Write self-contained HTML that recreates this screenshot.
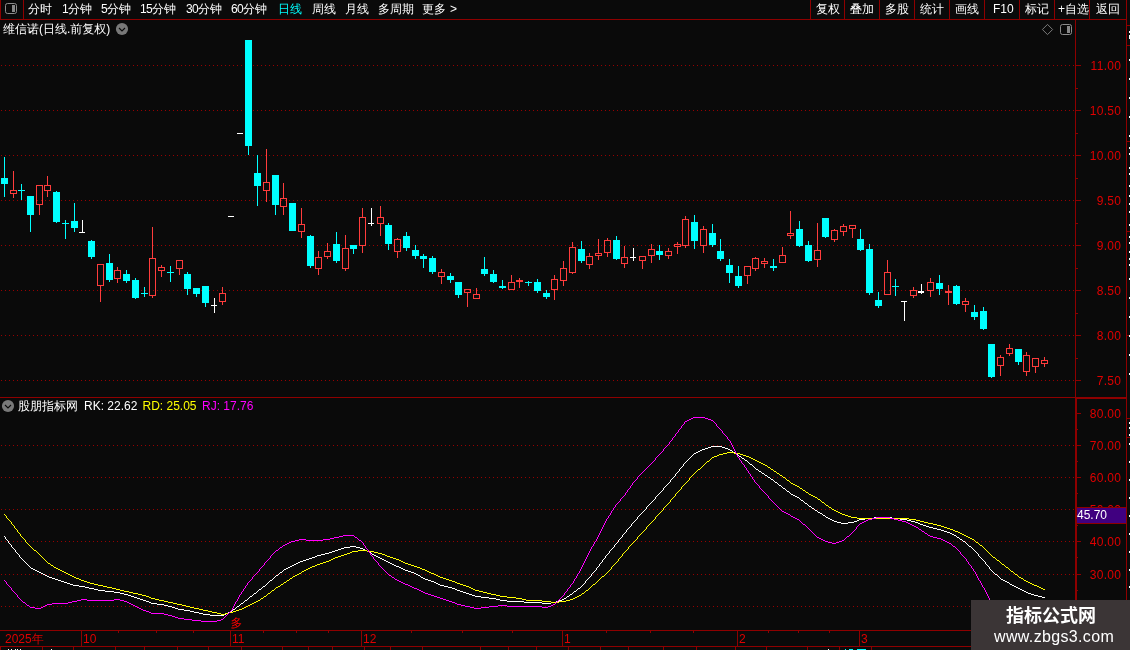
<!DOCTYPE html>
<html><head><meta charset="utf-8"><title>K线</title>
<style>
html,body{margin:0;padding:0;background:#0a0a0a;}
body{width:1130px;height:650px;position:relative;overflow:hidden;font-family:"Liberation Sans","WenQuanYi Zen Hei",sans-serif;font-size:12px;line-height:14px;}
.d{letter-spacing:-0.67px;}
.t{position:absolute;white-space:nowrap;height:14px;line-height:14px;font-size:12px;}
.r{right:8.67px;text-align:right;letter-spacing:0.33px;}
svg{position:absolute;left:0;top:0;}
#tx{position:absolute;left:0;top:0;width:1130px;height:650px;will-change:transform;}
#wm{will-change:transform;position:absolute;left:971px;top:600px;width:159px;height:50px;background:#3b3536;color:#fff;}
#wm .a{position:absolute;left:35px;top:4px;font-size:18px;line-height:24px;font-weight:bold;white-space:nowrap;font-family:"Liberation Sans","Noto Sans CJK SC",sans-serif;}
#wm .b{position:absolute;left:23px;top:27px;font-size:16px;line-height:20px;white-space:nowrap;letter-spacing:0.35px;}
</style></head><body>
<svg width="1130" height="650" viewBox="0 0 1130 650" shape-rendering="crispEdges">
<rect x="0" y="19" width="1127" height="1" fill="#8e0000"/>
<rect x="0" y="0" width="1" height="20" fill="#8e0000"/>
<rect x="23" y="0" width="1" height="20" fill="#8e0000"/>
<rect x="810" y="0" width="1" height="20" fill="#8e0000"/>
<rect x="844" y="0" width="1" height="20" fill="#8e0000"/>
<rect x="879" y="0" width="1" height="20" fill="#8e0000"/>
<rect x="914" y="0" width="1" height="20" fill="#8e0000"/>
<rect x="949" y="0" width="1" height="20" fill="#8e0000"/>
<rect x="984" y="0" width="1" height="20" fill="#8e0000"/>
<rect x="1019" y="0" width="1" height="20" fill="#8e0000"/>
<rect x="1054" y="0" width="1" height="20" fill="#8e0000"/>
<rect x="1089" y="0" width="1" height="20" fill="#8e0000"/>
<rect x="1126" y="0" width="1" height="650" fill="#8e0000"/>
<rect x="1075" y="19" width="1" height="378" fill="#8e0000"/>
<rect x="1075" y="397" width="2" height="234" fill="#8e0000"/>
<rect x="0" y="397" width="1075" height="1" fill="#8e0000"/>
<rect x="1075" y="397" width="52" height="2" fill="#8e0000"/>
<rect x="0" y="630" width="1075" height="1" fill="#8e0000"/>
<rect x="1075" y="630" width="52" height="1" fill="#8e0000"/>
<rect x="0" y="646" width="1127" height="1" fill="#8e0000"/>
<rect x="1126" y="25" width="4" height="1" fill="#8e0000"/>
<rect x="1126" y="45" width="4" height="1" fill="#8e0000"/>
<rect x="1126" y="141" width="4" height="1" fill="#8e0000"/>
<rect x="1126" y="231" width="4" height="1" fill="#8e0000"/>
<rect x="1126" y="335" width="4" height="1" fill="#8e0000"/>
<rect x="1126" y="418" width="4" height="1" fill="#8e0000"/>
<rect x="1126" y="437" width="4" height="1" fill="#8e0000"/>
<line x1="1" y1="65.5" x2="1074" y2="65.5" stroke="#980000" stroke-width="1" stroke-dasharray="1 3"/>
<line x1="1" y1="110.5" x2="1074" y2="110.5" stroke="#980000" stroke-width="1" stroke-dasharray="1 3"/>
<line x1="1" y1="155.5" x2="1074" y2="155.5" stroke="#980000" stroke-width="1" stroke-dasharray="1 3"/>
<line x1="1" y1="200.5" x2="1074" y2="200.5" stroke="#980000" stroke-width="1" stroke-dasharray="1 3"/>
<line x1="1" y1="245.5" x2="1074" y2="245.5" stroke="#980000" stroke-width="1" stroke-dasharray="1 3"/>
<line x1="1" y1="290.5" x2="1074" y2="290.5" stroke="#980000" stroke-width="1" stroke-dasharray="1 3"/>
<line x1="1" y1="335.5" x2="1074" y2="335.5" stroke="#980000" stroke-width="1" stroke-dasharray="1 3"/>
<line x1="1" y1="380.5" x2="1074" y2="380.5" stroke="#980000" stroke-width="1" stroke-dasharray="1 3"/>
<line x1="1" y1="445.5" x2="1074" y2="445.5" stroke="#980000" stroke-width="1" stroke-dasharray="1 3"/>
<line x1="1" y1="477.5" x2="1074" y2="477.5" stroke="#980000" stroke-width="1" stroke-dasharray="1 3"/>
<line x1="1" y1="509.5" x2="1074" y2="509.5" stroke="#980000" stroke-width="1" stroke-dasharray="1 3"/>
<line x1="1" y1="541.5" x2="1074" y2="541.5" stroke="#980000" stroke-width="1" stroke-dasharray="1 3"/>
<line x1="1" y1="574.5" x2="1074" y2="574.5" stroke="#980000" stroke-width="1" stroke-dasharray="1 3"/>
<line x1="1" y1="606.5" x2="1074" y2="606.5" stroke="#980000" stroke-width="1" stroke-dasharray="1 3"/>
<rect x="1076" y="65" width="5" height="1" fill="#8e0000"/>
<rect x="1076" y="88" width="2" height="1" fill="#8e0000"/>
<rect x="1076" y="110" width="5" height="1" fill="#8e0000"/>
<rect x="1076" y="133" width="2" height="1" fill="#8e0000"/>
<rect x="1076" y="155" width="5" height="1" fill="#8e0000"/>
<rect x="1076" y="178" width="2" height="1" fill="#8e0000"/>
<rect x="1076" y="200" width="5" height="1" fill="#8e0000"/>
<rect x="1076" y="223" width="2" height="1" fill="#8e0000"/>
<rect x="1076" y="245" width="5" height="1" fill="#8e0000"/>
<rect x="1076" y="268" width="2" height="1" fill="#8e0000"/>
<rect x="1076" y="290" width="5" height="1" fill="#8e0000"/>
<rect x="1076" y="313" width="2" height="1" fill="#8e0000"/>
<rect x="1076" y="335" width="5" height="1" fill="#8e0000"/>
<rect x="1076" y="358" width="2" height="1" fill="#8e0000"/>
<rect x="1076" y="380" width="5" height="1" fill="#8e0000"/>
<rect x="1077" y="413" width="4" height="1" fill="#8e0000"/>
<rect x="1077" y="429" width="1" height="1" fill="#8e0000"/>
<rect x="1077" y="445" width="4" height="1" fill="#8e0000"/>
<rect x="1077" y="461" width="1" height="1" fill="#8e0000"/>
<rect x="1077" y="477" width="4" height="1" fill="#8e0000"/>
<rect x="1077" y="493" width="1" height="1" fill="#8e0000"/>
<rect x="1077" y="509" width="4" height="1" fill="#8e0000"/>
<rect x="1077" y="525" width="1" height="1" fill="#8e0000"/>
<rect x="1077" y="541" width="4" height="1" fill="#8e0000"/>
<rect x="1077" y="557" width="1" height="1" fill="#8e0000"/>
<rect x="1077" y="574" width="4" height="1" fill="#8e0000"/>
<rect x="1077" y="590" width="1" height="1" fill="#8e0000"/>
<rect x="1077" y="606" width="4" height="1" fill="#8e0000"/>
<rect x="1077" y="622" width="2" height="1" fill="#8e0000"/>
<rect x="81" y="630" width="1" height="17" fill="#8e0000"/>
<rect x="230" y="630" width="1" height="17" fill="#8e0000"/>
<rect x="361" y="630" width="1" height="17" fill="#8e0000"/>
<rect x="562" y="630" width="1" height="17" fill="#8e0000"/>
<rect x="737" y="630" width="1" height="17" fill="#8e0000"/>
<rect x="859" y="630" width="1" height="17" fill="#8e0000"/>
<rect x="118" y="630" width="1" height="3" fill="#8e0000"/>
<rect x="156" y="630" width="1" height="3" fill="#8e0000"/>
<rect x="193" y="630" width="1" height="3" fill="#8e0000"/>
<rect x="263" y="630" width="1" height="3" fill="#8e0000"/>
<rect x="296" y="630" width="1" height="3" fill="#8e0000"/>
<rect x="328" y="630" width="1" height="3" fill="#8e0000"/>
<rect x="411" y="630" width="1" height="3" fill="#8e0000"/>
<rect x="462" y="630" width="1" height="3" fill="#8e0000"/>
<rect x="512" y="630" width="1" height="3" fill="#8e0000"/>
<rect x="606" y="630" width="1" height="3" fill="#8e0000"/>
<rect x="650" y="630" width="1" height="3" fill="#8e0000"/>
<rect x="693" y="630" width="1" height="3" fill="#8e0000"/>
<rect x="768" y="630" width="1" height="3" fill="#8e0000"/>
<rect x="798" y="630" width="1" height="3" fill="#8e0000"/>
<rect x="829" y="630" width="1" height="3" fill="#8e0000"/>
<rect x="0" y="647" width="1" height="3" fill="#8e0000"/>
<rect x="42" y="647" width="1" height="3" fill="#8e0000"/>
<rect x="73" y="647" width="1" height="3" fill="#8e0000"/>
<rect x="115" y="647" width="1" height="3" fill="#8e0000"/>
<rect x="144" y="647" width="1" height="3" fill="#8e0000"/>
<rect x="177" y="647" width="1" height="3" fill="#8e0000"/>
<rect x="208" y="647" width="1" height="3" fill="#8e0000"/>
<rect x="241" y="647" width="1" height="3" fill="#8e0000"/>
<rect x="282" y="647" width="1" height="3" fill="#8e0000"/>
<rect x="308" y="647" width="1" height="3" fill="#8e0000"/>
<rect x="332" y="647" width="1" height="3" fill="#8e0000"/>
<rect x="364" y="647" width="1" height="3" fill="#8e0000"/>
<rect x="390" y="647" width="1" height="3" fill="#8e0000"/>
<rect x="422" y="647" width="1" height="3" fill="#8e0000"/>
<rect x="480" y="647" width="1" height="3" fill="#8e0000"/>
<rect x="508" y="647" width="1" height="3" fill="#8e0000"/>
<rect x="536" y="647" width="1" height="3" fill="#8e0000"/>
<rect x="568" y="647" width="1" height="3" fill="#8e0000"/>
<rect x="600" y="647" width="1" height="3" fill="#8e0000"/>
<rect x="628" y="647" width="1" height="3" fill="#8e0000"/>
<rect x="663" y="647" width="1" height="3" fill="#8e0000"/>
<rect x="696" y="647" width="1" height="3" fill="#8e0000"/>
<rect x="735" y="647" width="1" height="3" fill="#8e0000"/>
<rect x="766" y="647" width="1" height="3" fill="#8e0000"/>
<rect x="807" y="647" width="1" height="3" fill="#8e0000"/>
<rect x="839" y="647" width="1" height="3" fill="#8e0000"/>
<rect x="871" y="647" width="1" height="3" fill="#8e0000"/>
<rect x="8" y="649" width="1" height="1" fill="#ffffff"/>
<rect x="11" y="649" width="1" height="1" fill="#ffffff"/>
<rect x="15" y="649" width="1" height="1" fill="#ffffff"/>
<rect x="17" y="649" width="1" height="1" fill="#ffffff"/>
<rect x="20" y="649" width="1" height="1" fill="#ffffff"/>
<rect x="51" y="649" width="1" height="1" fill="#ffffff"/>
<rect x="828" y="649" width="1" height="1" fill="#ffffff"/>
<rect x="845" y="649" width="1" height="1" fill="#00ffff"/>
<rect x="849" y="649" width="4" height="1" fill="#00ffff"/>
<rect x="857" y="649" width="9" height="1" fill="#00ffff"/>
<rect x="1129" y="31" width="1" height="2" fill="#ffffff"/>
<rect x="1129" y="35" width="1" height="2" fill="#ffffff"/>
<rect x="1129" y="37" width="1" height="2" fill="#ffffff"/>
<rect x="1129" y="59" width="1" height="2" fill="#ffffff"/>
<rect x="1129" y="78" width="1" height="2" fill="#ffffff"/>
<rect x="1129" y="97" width="1" height="2" fill="#ffffff"/>
<rect x="1129" y="116" width="1" height="2" fill="#ffffff"/>
<rect x="1129" y="135" width="1" height="2" fill="#ffffff"/>
<rect x="1129" y="147" width="1" height="2" fill="#ffffff"/>
<rect x="1129" y="153" width="1" height="2" fill="#ffffff"/>
<rect x="1129" y="167" width="1" height="2" fill="#ffffff"/>
<rect x="1129" y="173" width="1" height="2" fill="#ffffff"/>
<rect x="1129" y="185" width="1" height="2" fill="#ffffff"/>
<rect x="1129" y="195" width="1" height="2" fill="#ffffff"/>
<rect x="1129" y="203" width="1" height="2" fill="#ffffff"/>
<rect x="1129" y="211" width="1" height="2" fill="#ffffff"/>
<rect x="1129" y="224" width="1" height="2" fill="#ffffff"/>
<rect x="1129" y="236" width="1" height="2" fill="#ffffff"/>
<rect x="1129" y="242" width="1" height="2" fill="#ffffff"/>
<rect x="1129" y="251" width="1" height="2" fill="#ffffff"/>
<rect x="1129" y="258" width="1" height="2" fill="#ffffff"/>
<rect x="1129" y="264" width="1" height="2" fill="#ffffff"/>
<rect x="1129" y="278" width="1" height="2" fill="#ffffff"/>
<rect x="1129" y="297" width="1" height="2" fill="#ffffff"/>
<rect x="1129" y="316" width="1" height="2" fill="#ffffff"/>
<rect x="1129" y="335" width="1" height="2" fill="#ffffff"/>
<rect x="1129" y="354" width="1" height="2" fill="#ffffff"/>
<rect x="1129" y="373" width="1" height="2" fill="#ffffff"/>
<rect x="1129" y="422" width="1" height="2" fill="#ffffff"/>
<rect x="1129" y="427" width="1" height="2" fill="#ffffff"/>
<rect x="1129" y="434" width="1" height="2" fill="#ffffff"/>
<rect x="1129" y="443" width="1" height="2" fill="#ffffff"/>
<rect x="1129" y="461" width="1" height="2" fill="#ffffff"/>
<rect x="1129" y="479" width="1" height="2" fill="#ffffff"/>
<rect x="1129" y="497" width="1" height="2" fill="#ffffff"/>
<rect x="1129" y="515" width="1" height="2" fill="#ffffff"/>
<rect x="1129" y="533" width="1" height="2" fill="#ffffff"/>
<rect x="1129" y="551" width="1" height="2" fill="#ffffff"/>
<rect x="1129" y="569" width="1" height="2" fill="#ffffff"/>
<rect x="1129" y="586" width="1" height="2" fill="#ffffff"/>
<rect x="4" y="157" width="1" height="40" fill="#00ffff"/>
<rect x="1" y="178" width="7" height="6" fill="#00ffff"/>
<rect x="13" y="171" width="1" height="19" fill="#ff3c3c"/>
<rect x="13" y="194" width="1" height="4" fill="#ff3c3c"/>
<rect x="10" y="190" width="7" height="1" fill="#ff3c3c"/>
<rect x="10" y="193" width="7" height="1" fill="#ff3c3c"/>
<rect x="10" y="190" width="1" height="4" fill="#ff3c3c"/>
<rect x="16" y="190" width="1" height="4" fill="#ff3c3c"/>
<rect x="21" y="184" width="1" height="16" fill="#00ffff"/>
<rect x="18" y="190" width="7" height="1" fill="#00ffff"/>
<rect x="30" y="196" width="1" height="36" fill="#00ffff"/>
<rect x="27" y="196" width="7" height="19" fill="#00ffff"/>
<rect x="39" y="205" width="1" height="10" fill="#ff3c3c"/>
<rect x="36" y="185" width="7" height="1" fill="#ff3c3c"/>
<rect x="36" y="204" width="7" height="1" fill="#ff3c3c"/>
<rect x="36" y="185" width="1" height="20" fill="#ff3c3c"/>
<rect x="42" y="185" width="1" height="20" fill="#ff3c3c"/>
<rect x="47" y="176" width="1" height="9" fill="#ff3c3c"/>
<rect x="47" y="191" width="1" height="6" fill="#ff3c3c"/>
<rect x="44" y="185" width="7" height="1" fill="#ff3c3c"/>
<rect x="44" y="190" width="7" height="1" fill="#ff3c3c"/>
<rect x="44" y="185" width="1" height="6" fill="#ff3c3c"/>
<rect x="50" y="185" width="1" height="6" fill="#ff3c3c"/>
<rect x="56" y="191" width="1" height="32" fill="#00ffff"/>
<rect x="53" y="192" width="7" height="30" fill="#00ffff"/>
<rect x="65" y="220" width="1" height="19" fill="#00ffff"/>
<rect x="62" y="223" width="7" height="1" fill="#00ffff"/>
<rect x="74" y="203" width="1" height="29" fill="#00ffff"/>
<rect x="71" y="221" width="7" height="7" fill="#00ffff"/>
<rect x="82" y="220" width="1" height="13" fill="#ffffff"/>
<rect x="79" y="232" width="6" height="1" fill="#ffffff"/>
<rect x="91" y="240" width="1" height="19" fill="#00ffff"/>
<rect x="88" y="241" width="7" height="16" fill="#00ffff"/>
<rect x="100" y="286" width="1" height="16" fill="#ff3c3c"/>
<rect x="97" y="264" width="7" height="1" fill="#ff3c3c"/>
<rect x="97" y="285" width="7" height="1" fill="#ff3c3c"/>
<rect x="97" y="264" width="1" height="22" fill="#ff3c3c"/>
<rect x="103" y="264" width="1" height="22" fill="#ff3c3c"/>
<rect x="109" y="254" width="1" height="28" fill="#00ffff"/>
<rect x="106" y="263" width="7" height="17" fill="#00ffff"/>
<rect x="117" y="267" width="1" height="3" fill="#ff3c3c"/>
<rect x="117" y="279" width="1" height="4" fill="#ff3c3c"/>
<rect x="114" y="270" width="7" height="1" fill="#ff3c3c"/>
<rect x="114" y="278" width="7" height="1" fill="#ff3c3c"/>
<rect x="114" y="270" width="1" height="9" fill="#ff3c3c"/>
<rect x="120" y="270" width="1" height="9" fill="#ff3c3c"/>
<rect x="126" y="270" width="1" height="13" fill="#00ffff"/>
<rect x="123" y="274" width="7" height="7" fill="#00ffff"/>
<rect x="135" y="278" width="1" height="21" fill="#00ffff"/>
<rect x="132" y="280" width="7" height="18" fill="#00ffff"/>
<rect x="144" y="287" width="1" height="10" fill="#00ffff"/>
<rect x="141" y="293" width="7" height="1" fill="#00ffff"/>
<rect x="152" y="227" width="1" height="31" fill="#ff3c3c"/>
<rect x="152" y="296" width="1" height="2" fill="#ff3c3c"/>
<rect x="149" y="258" width="7" height="1" fill="#ff3c3c"/>
<rect x="149" y="295" width="7" height="1" fill="#ff3c3c"/>
<rect x="149" y="258" width="1" height="38" fill="#ff3c3c"/>
<rect x="155" y="258" width="1" height="38" fill="#ff3c3c"/>
<rect x="161" y="265" width="1" height="2" fill="#ff3c3c"/>
<rect x="161" y="271" width="1" height="6" fill="#ff3c3c"/>
<rect x="158" y="267" width="7" height="1" fill="#ff3c3c"/>
<rect x="158" y="270" width="7" height="1" fill="#ff3c3c"/>
<rect x="158" y="267" width="1" height="4" fill="#ff3c3c"/>
<rect x="164" y="267" width="1" height="4" fill="#ff3c3c"/>
<rect x="170" y="266" width="1" height="16" fill="#00ffff"/>
<rect x="167" y="272" width="7" height="1" fill="#00ffff"/>
<rect x="179" y="269" width="1" height="6" fill="#ff3c3c"/>
<rect x="176" y="260" width="7" height="1" fill="#ff3c3c"/>
<rect x="176" y="268" width="7" height="1" fill="#ff3c3c"/>
<rect x="176" y="260" width="1" height="9" fill="#ff3c3c"/>
<rect x="182" y="260" width="1" height="9" fill="#ff3c3c"/>
<rect x="187" y="272" width="1" height="23" fill="#00ffff"/>
<rect x="184" y="274" width="7" height="15" fill="#00ffff"/>
<rect x="196" y="288" width="1" height="9" fill="#00ffff"/>
<rect x="193" y="288" width="7" height="6" fill="#00ffff"/>
<rect x="205" y="286" width="1" height="21" fill="#00ffff"/>
<rect x="202" y="286" width="7" height="17" fill="#00ffff"/>
<rect x="214" y="298" width="1" height="15" fill="#ffffff"/>
<rect x="211" y="305" width="6" height="1" fill="#ffffff"/>
<rect x="222" y="287" width="1" height="6" fill="#ff3c3c"/>
<rect x="222" y="302" width="1" height="3" fill="#ff3c3c"/>
<rect x="219" y="293" width="7" height="1" fill="#ff3c3c"/>
<rect x="219" y="301" width="7" height="1" fill="#ff3c3c"/>
<rect x="219" y="293" width="1" height="9" fill="#ff3c3c"/>
<rect x="225" y="293" width="1" height="9" fill="#ff3c3c"/>
<rect x="231" y="216" width="1" height="1" fill="#ffffff"/>
<rect x="228" y="216" width="6" height="1" fill="#ffffff"/>
<rect x="240" y="133" width="1" height="1" fill="#ffffff"/>
<rect x="237" y="133" width="6" height="1" fill="#ffffff"/>
<rect x="248" y="40" width="1" height="115" fill="#00ffff"/>
<rect x="245" y="40" width="7" height="106" fill="#00ffff"/>
<rect x="257" y="155" width="1" height="51" fill="#00ffff"/>
<rect x="254" y="173" width="7" height="13" fill="#00ffff"/>
<rect x="266" y="149" width="1" height="33" fill="#ff3c3c"/>
<rect x="266" y="191" width="1" height="11" fill="#ff3c3c"/>
<rect x="263" y="182" width="7" height="1" fill="#ff3c3c"/>
<rect x="263" y="190" width="7" height="1" fill="#ff3c3c"/>
<rect x="263" y="182" width="1" height="9" fill="#ff3c3c"/>
<rect x="269" y="182" width="1" height="9" fill="#ff3c3c"/>
<rect x="275" y="175" width="1" height="40" fill="#00ffff"/>
<rect x="272" y="175" width="7" height="30" fill="#00ffff"/>
<rect x="283" y="183" width="1" height="15" fill="#ff3c3c"/>
<rect x="283" y="207" width="1" height="8" fill="#ff3c3c"/>
<rect x="280" y="198" width="7" height="1" fill="#ff3c3c"/>
<rect x="280" y="206" width="7" height="1" fill="#ff3c3c"/>
<rect x="280" y="198" width="1" height="9" fill="#ff3c3c"/>
<rect x="286" y="198" width="1" height="9" fill="#ff3c3c"/>
<rect x="292" y="203" width="1" height="28" fill="#00ffff"/>
<rect x="289" y="203" width="7" height="28" fill="#00ffff"/>
<rect x="301" y="208" width="1" height="16" fill="#ff3c3c"/>
<rect x="301" y="232" width="1" height="6" fill="#ff3c3c"/>
<rect x="298" y="224" width="7" height="1" fill="#ff3c3c"/>
<rect x="298" y="231" width="7" height="1" fill="#ff3c3c"/>
<rect x="298" y="224" width="1" height="8" fill="#ff3c3c"/>
<rect x="304" y="224" width="1" height="8" fill="#ff3c3c"/>
<rect x="310" y="235" width="1" height="33" fill="#00ffff"/>
<rect x="307" y="236" width="7" height="30" fill="#00ffff"/>
<rect x="318" y="251" width="1" height="6" fill="#ff3c3c"/>
<rect x="318" y="269" width="1" height="6" fill="#ff3c3c"/>
<rect x="315" y="257" width="7" height="1" fill="#ff3c3c"/>
<rect x="315" y="268" width="7" height="1" fill="#ff3c3c"/>
<rect x="315" y="257" width="1" height="12" fill="#ff3c3c"/>
<rect x="321" y="257" width="1" height="12" fill="#ff3c3c"/>
<rect x="327" y="243" width="1" height="8" fill="#ff3c3c"/>
<rect x="327" y="257" width="1" height="2" fill="#ff3c3c"/>
<rect x="324" y="251" width="7" height="1" fill="#ff3c3c"/>
<rect x="324" y="256" width="7" height="1" fill="#ff3c3c"/>
<rect x="324" y="251" width="1" height="6" fill="#ff3c3c"/>
<rect x="330" y="251" width="1" height="6" fill="#ff3c3c"/>
<rect x="336" y="232" width="1" height="31" fill="#00ffff"/>
<rect x="333" y="244" width="7" height="17" fill="#00ffff"/>
<rect x="345" y="235" width="1" height="13" fill="#ff3c3c"/>
<rect x="345" y="269" width="1" height="2" fill="#ff3c3c"/>
<rect x="342" y="248" width="7" height="1" fill="#ff3c3c"/>
<rect x="342" y="268" width="7" height="1" fill="#ff3c3c"/>
<rect x="342" y="248" width="1" height="21" fill="#ff3c3c"/>
<rect x="348" y="248" width="1" height="21" fill="#ff3c3c"/>
<rect x="353" y="245" width="1" height="9" fill="#00ffff"/>
<rect x="350" y="245" width="7" height="4" fill="#00ffff"/>
<rect x="362" y="208" width="1" height="9" fill="#ff3c3c"/>
<rect x="362" y="246" width="1" height="7" fill="#ff3c3c"/>
<rect x="359" y="217" width="7" height="1" fill="#ff3c3c"/>
<rect x="359" y="245" width="7" height="1" fill="#ff3c3c"/>
<rect x="359" y="217" width="1" height="29" fill="#ff3c3c"/>
<rect x="365" y="217" width="1" height="29" fill="#ff3c3c"/>
<rect x="371" y="208" width="1" height="18" fill="#ffffff"/>
<rect x="368" y="223" width="6" height="1" fill="#ffffff"/>
<rect x="380" y="206" width="1" height="11" fill="#ff3c3c"/>
<rect x="380" y="224" width="1" height="12" fill="#ff3c3c"/>
<rect x="377" y="217" width="7" height="1" fill="#ff3c3c"/>
<rect x="377" y="223" width="7" height="1" fill="#ff3c3c"/>
<rect x="377" y="217" width="1" height="7" fill="#ff3c3c"/>
<rect x="383" y="217" width="1" height="7" fill="#ff3c3c"/>
<rect x="388" y="223" width="1" height="27" fill="#00ffff"/>
<rect x="385" y="225" width="7" height="19" fill="#00ffff"/>
<rect x="397" y="238" width="1" height="1" fill="#ff3c3c"/>
<rect x="397" y="252" width="1" height="6" fill="#ff3c3c"/>
<rect x="394" y="239" width="7" height="1" fill="#ff3c3c"/>
<rect x="394" y="251" width="7" height="1" fill="#ff3c3c"/>
<rect x="394" y="239" width="1" height="13" fill="#ff3c3c"/>
<rect x="400" y="239" width="1" height="13" fill="#ff3c3c"/>
<rect x="406" y="232" width="1" height="19" fill="#00ffff"/>
<rect x="403" y="236" width="7" height="12" fill="#00ffff"/>
<rect x="415" y="245" width="1" height="14" fill="#00ffff"/>
<rect x="412" y="250" width="7" height="6" fill="#00ffff"/>
<rect x="423" y="254" width="1" height="14" fill="#00ffff"/>
<rect x="420" y="256" width="7" height="3" fill="#00ffff"/>
<rect x="432" y="256" width="1" height="18" fill="#00ffff"/>
<rect x="429" y="258" width="7" height="14" fill="#00ffff"/>
<rect x="441" y="269" width="1" height="3" fill="#ff3c3c"/>
<rect x="441" y="277" width="1" height="7" fill="#ff3c3c"/>
<rect x="438" y="272" width="7" height="1" fill="#ff3c3c"/>
<rect x="438" y="276" width="7" height="1" fill="#ff3c3c"/>
<rect x="438" y="272" width="1" height="5" fill="#ff3c3c"/>
<rect x="444" y="272" width="1" height="5" fill="#ff3c3c"/>
<rect x="450" y="273" width="1" height="10" fill="#00ffff"/>
<rect x="447" y="276" width="7" height="4" fill="#00ffff"/>
<rect x="458" y="282" width="1" height="16" fill="#00ffff"/>
<rect x="455" y="282" width="7" height="13" fill="#00ffff"/>
<rect x="467" y="293" width="1" height="14" fill="#ff3c3c"/>
<rect x="464" y="289" width="7" height="1" fill="#ff3c3c"/>
<rect x="464" y="292" width="7" height="1" fill="#ff3c3c"/>
<rect x="464" y="289" width="1" height="4" fill="#ff3c3c"/>
<rect x="470" y="289" width="1" height="4" fill="#ff3c3c"/>
<rect x="476" y="288" width="1" height="6" fill="#ff3c3c"/>
<rect x="473" y="294" width="7" height="1" fill="#ff3c3c"/>
<rect x="473" y="298" width="7" height="1" fill="#ff3c3c"/>
<rect x="473" y="294" width="1" height="5" fill="#ff3c3c"/>
<rect x="479" y="294" width="1" height="5" fill="#ff3c3c"/>
<rect x="484" y="257" width="1" height="19" fill="#00ffff"/>
<rect x="481" y="269" width="7" height="5" fill="#00ffff"/>
<rect x="493" y="270" width="1" height="13" fill="#00ffff"/>
<rect x="490" y="274" width="7" height="8" fill="#00ffff"/>
<rect x="502" y="280" width="1" height="9" fill="#00ffff"/>
<rect x="499" y="286" width="7" height="2" fill="#00ffff"/>
<rect x="511" y="275" width="1" height="7" fill="#ff3c3c"/>
<rect x="508" y="282" width="7" height="1" fill="#ff3c3c"/>
<rect x="508" y="289" width="7" height="1" fill="#ff3c3c"/>
<rect x="508" y="282" width="1" height="8" fill="#ff3c3c"/>
<rect x="514" y="282" width="1" height="8" fill="#ff3c3c"/>
<rect x="519" y="278" width="1" height="2" fill="#ff3c3c"/>
<rect x="519" y="282" width="1" height="6" fill="#ff3c3c"/>
<rect x="516" y="280" width="7" height="2" fill="#ff3c3c"/>
<rect x="528" y="281" width="1" height="5" fill="#00ffff"/>
<rect x="525" y="282" width="7" height="1" fill="#00ffff"/>
<rect x="537" y="279" width="1" height="14" fill="#00ffff"/>
<rect x="534" y="282" width="7" height="9" fill="#00ffff"/>
<rect x="546" y="290" width="1" height="9" fill="#00ffff"/>
<rect x="543" y="293" width="7" height="4" fill="#00ffff"/>
<rect x="554" y="275" width="1" height="4" fill="#ff3c3c"/>
<rect x="554" y="290" width="1" height="10" fill="#ff3c3c"/>
<rect x="551" y="279" width="7" height="1" fill="#ff3c3c"/>
<rect x="551" y="289" width="7" height="1" fill="#ff3c3c"/>
<rect x="551" y="279" width="1" height="11" fill="#ff3c3c"/>
<rect x="557" y="279" width="1" height="11" fill="#ff3c3c"/>
<rect x="563" y="261" width="1" height="7" fill="#ff3c3c"/>
<rect x="563" y="281" width="1" height="5" fill="#ff3c3c"/>
<rect x="560" y="268" width="7" height="1" fill="#ff3c3c"/>
<rect x="560" y="280" width="7" height="1" fill="#ff3c3c"/>
<rect x="560" y="268" width="1" height="13" fill="#ff3c3c"/>
<rect x="566" y="268" width="1" height="13" fill="#ff3c3c"/>
<rect x="572" y="242" width="1" height="5" fill="#ff3c3c"/>
<rect x="572" y="273" width="1" height="1" fill="#ff3c3c"/>
<rect x="569" y="247" width="7" height="1" fill="#ff3c3c"/>
<rect x="569" y="272" width="7" height="1" fill="#ff3c3c"/>
<rect x="569" y="247" width="1" height="26" fill="#ff3c3c"/>
<rect x="575" y="247" width="1" height="26" fill="#ff3c3c"/>
<rect x="581" y="241" width="1" height="22" fill="#00ffff"/>
<rect x="578" y="249" width="7" height="12" fill="#00ffff"/>
<rect x="589" y="253" width="1" height="3" fill="#ff3c3c"/>
<rect x="589" y="265" width="1" height="4" fill="#ff3c3c"/>
<rect x="586" y="256" width="7" height="1" fill="#ff3c3c"/>
<rect x="586" y="264" width="7" height="1" fill="#ff3c3c"/>
<rect x="586" y="256" width="1" height="9" fill="#ff3c3c"/>
<rect x="592" y="256" width="1" height="9" fill="#ff3c3c"/>
<rect x="598" y="239" width="1" height="14" fill="#ff3c3c"/>
<rect x="598" y="256" width="1" height="4" fill="#ff3c3c"/>
<rect x="595" y="253" width="7" height="1" fill="#ff3c3c"/>
<rect x="595" y="255" width="7" height="1" fill="#ff3c3c"/>
<rect x="595" y="253" width="1" height="3" fill="#ff3c3c"/>
<rect x="601" y="253" width="1" height="3" fill="#ff3c3c"/>
<rect x="607" y="238" width="1" height="2" fill="#ff3c3c"/>
<rect x="607" y="253" width="1" height="4" fill="#ff3c3c"/>
<rect x="604" y="240" width="7" height="1" fill="#ff3c3c"/>
<rect x="604" y="252" width="7" height="1" fill="#ff3c3c"/>
<rect x="604" y="240" width="1" height="13" fill="#ff3c3c"/>
<rect x="610" y="240" width="1" height="13" fill="#ff3c3c"/>
<rect x="616" y="236" width="1" height="24" fill="#00ffff"/>
<rect x="613" y="240" width="7" height="19" fill="#00ffff"/>
<rect x="624" y="246" width="1" height="11" fill="#ff3c3c"/>
<rect x="624" y="264" width="1" height="4" fill="#ff3c3c"/>
<rect x="621" y="257" width="7" height="1" fill="#ff3c3c"/>
<rect x="621" y="263" width="7" height="1" fill="#ff3c3c"/>
<rect x="621" y="257" width="1" height="7" fill="#ff3c3c"/>
<rect x="627" y="257" width="1" height="7" fill="#ff3c3c"/>
<rect x="633" y="248" width="1" height="13" fill="#ffffff"/>
<rect x="630" y="257" width="6" height="1" fill="#ffffff"/>
<rect x="642" y="261" width="1" height="8" fill="#ff3c3c"/>
<rect x="639" y="256" width="7" height="1" fill="#ff3c3c"/>
<rect x="639" y="260" width="7" height="1" fill="#ff3c3c"/>
<rect x="639" y="256" width="1" height="5" fill="#ff3c3c"/>
<rect x="645" y="256" width="1" height="5" fill="#ff3c3c"/>
<rect x="651" y="244" width="1" height="5" fill="#ff3c3c"/>
<rect x="651" y="256" width="1" height="7" fill="#ff3c3c"/>
<rect x="648" y="249" width="7" height="1" fill="#ff3c3c"/>
<rect x="648" y="255" width="7" height="1" fill="#ff3c3c"/>
<rect x="648" y="249" width="1" height="7" fill="#ff3c3c"/>
<rect x="654" y="249" width="1" height="7" fill="#ff3c3c"/>
<rect x="659" y="245" width="1" height="15" fill="#00ffff"/>
<rect x="656" y="251" width="7" height="4" fill="#00ffff"/>
<rect x="668" y="248" width="1" height="3" fill="#ff3c3c"/>
<rect x="668" y="256" width="1" height="3" fill="#ff3c3c"/>
<rect x="665" y="251" width="7" height="1" fill="#ff3c3c"/>
<rect x="665" y="255" width="7" height="1" fill="#ff3c3c"/>
<rect x="665" y="251" width="1" height="5" fill="#ff3c3c"/>
<rect x="671" y="251" width="1" height="5" fill="#ff3c3c"/>
<rect x="677" y="242" width="1" height="2" fill="#ff3c3c"/>
<rect x="677" y="247" width="1" height="7" fill="#ff3c3c"/>
<rect x="674" y="244" width="7" height="1" fill="#ff3c3c"/>
<rect x="674" y="246" width="7" height="1" fill="#ff3c3c"/>
<rect x="674" y="244" width="1" height="3" fill="#ff3c3c"/>
<rect x="680" y="244" width="1" height="3" fill="#ff3c3c"/>
<rect x="685" y="216" width="1" height="3" fill="#ff3c3c"/>
<rect x="685" y="246" width="1" height="2" fill="#ff3c3c"/>
<rect x="682" y="219" width="7" height="1" fill="#ff3c3c"/>
<rect x="682" y="245" width="7" height="1" fill="#ff3c3c"/>
<rect x="682" y="219" width="1" height="27" fill="#ff3c3c"/>
<rect x="688" y="219" width="1" height="27" fill="#ff3c3c"/>
<rect x="694" y="215" width="1" height="34" fill="#00ffff"/>
<rect x="691" y="222" width="7" height="19" fill="#00ffff"/>
<rect x="703" y="226" width="1" height="3" fill="#ff3c3c"/>
<rect x="703" y="246" width="1" height="7" fill="#ff3c3c"/>
<rect x="700" y="229" width="7" height="1" fill="#ff3c3c"/>
<rect x="700" y="245" width="7" height="1" fill="#ff3c3c"/>
<rect x="700" y="229" width="1" height="17" fill="#ff3c3c"/>
<rect x="706" y="229" width="1" height="17" fill="#ff3c3c"/>
<rect x="712" y="224" width="1" height="23" fill="#00ffff"/>
<rect x="709" y="233" width="7" height="12" fill="#00ffff"/>
<rect x="720" y="239" width="1" height="22" fill="#00ffff"/>
<rect x="717" y="251" width="7" height="8" fill="#00ffff"/>
<rect x="729" y="259" width="1" height="24" fill="#00ffff"/>
<rect x="726" y="265" width="7" height="8" fill="#00ffff"/>
<rect x="738" y="266" width="1" height="22" fill="#00ffff"/>
<rect x="735" y="276" width="7" height="10" fill="#00ffff"/>
<rect x="747" y="276" width="1" height="8" fill="#ff3c3c"/>
<rect x="744" y="266" width="7" height="1" fill="#ff3c3c"/>
<rect x="744" y="275" width="7" height="1" fill="#ff3c3c"/>
<rect x="744" y="266" width="1" height="10" fill="#ff3c3c"/>
<rect x="750" y="266" width="1" height="10" fill="#ff3c3c"/>
<rect x="755" y="257" width="1" height="1" fill="#ff3c3c"/>
<rect x="755" y="269" width="1" height="2" fill="#ff3c3c"/>
<rect x="752" y="258" width="7" height="1" fill="#ff3c3c"/>
<rect x="752" y="268" width="7" height="1" fill="#ff3c3c"/>
<rect x="752" y="258" width="1" height="11" fill="#ff3c3c"/>
<rect x="758" y="258" width="1" height="11" fill="#ff3c3c"/>
<rect x="764" y="258" width="1" height="3" fill="#ff3c3c"/>
<rect x="764" y="264" width="1" height="4" fill="#ff3c3c"/>
<rect x="761" y="261" width="7" height="1" fill="#ff3c3c"/>
<rect x="761" y="263" width="7" height="1" fill="#ff3c3c"/>
<rect x="761" y="261" width="1" height="3" fill="#ff3c3c"/>
<rect x="767" y="261" width="1" height="3" fill="#ff3c3c"/>
<rect x="773" y="259" width="1" height="12" fill="#00ffff"/>
<rect x="770" y="266" width="7" height="2" fill="#00ffff"/>
<rect x="782" y="247" width="1" height="8" fill="#ff3c3c"/>
<rect x="779" y="255" width="7" height="1" fill="#ff3c3c"/>
<rect x="779" y="262" width="7" height="1" fill="#ff3c3c"/>
<rect x="779" y="255" width="1" height="8" fill="#ff3c3c"/>
<rect x="785" y="255" width="1" height="8" fill="#ff3c3c"/>
<rect x="790" y="211" width="1" height="22" fill="#ff3c3c"/>
<rect x="790" y="236" width="1" height="3" fill="#ff3c3c"/>
<rect x="787" y="233" width="7" height="1" fill="#ff3c3c"/>
<rect x="787" y="235" width="7" height="1" fill="#ff3c3c"/>
<rect x="787" y="233" width="1" height="3" fill="#ff3c3c"/>
<rect x="793" y="233" width="1" height="3" fill="#ff3c3c"/>
<rect x="799" y="221" width="1" height="26" fill="#00ffff"/>
<rect x="796" y="229" width="7" height="17" fill="#00ffff"/>
<rect x="808" y="241" width="1" height="21" fill="#00ffff"/>
<rect x="805" y="245" width="7" height="16" fill="#00ffff"/>
<rect x="817" y="223" width="1" height="27" fill="#ff3c3c"/>
<rect x="817" y="260" width="1" height="7" fill="#ff3c3c"/>
<rect x="814" y="250" width="7" height="1" fill="#ff3c3c"/>
<rect x="814" y="259" width="7" height="1" fill="#ff3c3c"/>
<rect x="814" y="250" width="1" height="10" fill="#ff3c3c"/>
<rect x="820" y="250" width="1" height="10" fill="#ff3c3c"/>
<rect x="825" y="218" width="1" height="20" fill="#00ffff"/>
<rect x="822" y="218" width="7" height="19" fill="#00ffff"/>
<rect x="834" y="229" width="1" height="1" fill="#ff3c3c"/>
<rect x="834" y="240" width="1" height="2" fill="#ff3c3c"/>
<rect x="831" y="230" width="7" height="1" fill="#ff3c3c"/>
<rect x="831" y="239" width="7" height="1" fill="#ff3c3c"/>
<rect x="831" y="230" width="1" height="10" fill="#ff3c3c"/>
<rect x="837" y="230" width="1" height="10" fill="#ff3c3c"/>
<rect x="843" y="224" width="1" height="2" fill="#ff3c3c"/>
<rect x="843" y="232" width="1" height="4" fill="#ff3c3c"/>
<rect x="840" y="226" width="7" height="1" fill="#ff3c3c"/>
<rect x="840" y="231" width="7" height="1" fill="#ff3c3c"/>
<rect x="840" y="226" width="1" height="6" fill="#ff3c3c"/>
<rect x="846" y="226" width="1" height="6" fill="#ff3c3c"/>
<rect x="852" y="229" width="1" height="9" fill="#ff3c3c"/>
<rect x="849" y="225" width="7" height="1" fill="#ff3c3c"/>
<rect x="849" y="228" width="7" height="1" fill="#ff3c3c"/>
<rect x="849" y="225" width="1" height="4" fill="#ff3c3c"/>
<rect x="855" y="225" width="1" height="4" fill="#ff3c3c"/>
<rect x="860" y="229" width="1" height="22" fill="#00ffff"/>
<rect x="857" y="239" width="7" height="11" fill="#00ffff"/>
<rect x="869" y="244" width="1" height="51" fill="#00ffff"/>
<rect x="866" y="249" width="7" height="44" fill="#00ffff"/>
<rect x="878" y="292" width="1" height="16" fill="#00ffff"/>
<rect x="875" y="300" width="7" height="6" fill="#00ffff"/>
<rect x="887" y="260" width="1" height="12" fill="#ff3c3c"/>
<rect x="884" y="272" width="7" height="1" fill="#ff3c3c"/>
<rect x="884" y="294" width="7" height="1" fill="#ff3c3c"/>
<rect x="884" y="272" width="1" height="23" fill="#ff3c3c"/>
<rect x="890" y="272" width="1" height="23" fill="#ff3c3c"/>
<rect x="895" y="279" width="1" height="17" fill="#00ffff"/>
<rect x="892" y="286" width="7" height="1" fill="#00ffff"/>
<rect x="904" y="301" width="1" height="20" fill="#ffffff"/>
<rect x="901" y="301" width="6" height="1" fill="#ffffff"/>
<rect x="913" y="287" width="1" height="3" fill="#ff3c3c"/>
<rect x="913" y="296" width="1" height="2" fill="#ff3c3c"/>
<rect x="910" y="290" width="7" height="1" fill="#ff3c3c"/>
<rect x="910" y="295" width="7" height="1" fill="#ff3c3c"/>
<rect x="910" y="290" width="1" height="6" fill="#ff3c3c"/>
<rect x="916" y="290" width="1" height="6" fill="#ff3c3c"/>
<rect x="921" y="284" width="1" height="10" fill="#ffffff"/>
<rect x="918" y="291" width="6" height="2" fill="#ffffff"/>
<rect x="930" y="278" width="1" height="4" fill="#ff3c3c"/>
<rect x="930" y="291" width="1" height="6" fill="#ff3c3c"/>
<rect x="927" y="282" width="7" height="1" fill="#ff3c3c"/>
<rect x="927" y="290" width="7" height="1" fill="#ff3c3c"/>
<rect x="927" y="282" width="1" height="9" fill="#ff3c3c"/>
<rect x="933" y="282" width="1" height="9" fill="#ff3c3c"/>
<rect x="939" y="275" width="1" height="20" fill="#00ffff"/>
<rect x="936" y="283" width="7" height="6" fill="#00ffff"/>
<rect x="948" y="285" width="1" height="6" fill="#ff3c3c"/>
<rect x="948" y="293" width="1" height="12" fill="#ff3c3c"/>
<rect x="945" y="291" width="7" height="2" fill="#ff3c3c"/>
<rect x="956" y="285" width="1" height="20" fill="#00ffff"/>
<rect x="953" y="286" width="7" height="18" fill="#00ffff"/>
<rect x="965" y="298" width="1" height="3" fill="#ff3c3c"/>
<rect x="965" y="305" width="1" height="7" fill="#ff3c3c"/>
<rect x="962" y="301" width="7" height="1" fill="#ff3c3c"/>
<rect x="962" y="304" width="7" height="1" fill="#ff3c3c"/>
<rect x="962" y="301" width="1" height="4" fill="#ff3c3c"/>
<rect x="968" y="301" width="1" height="4" fill="#ff3c3c"/>
<rect x="974" y="305" width="1" height="15" fill="#00ffff"/>
<rect x="971" y="312" width="7" height="5" fill="#00ffff"/>
<rect x="983" y="307" width="1" height="23" fill="#00ffff"/>
<rect x="980" y="311" width="7" height="18" fill="#00ffff"/>
<rect x="991" y="344" width="1" height="34" fill="#00ffff"/>
<rect x="988" y="344" width="7" height="33" fill="#00ffff"/>
<rect x="1000" y="355" width="1" height="2" fill="#ff3c3c"/>
<rect x="1000" y="366" width="1" height="10" fill="#ff3c3c"/>
<rect x="997" y="357" width="7" height="1" fill="#ff3c3c"/>
<rect x="997" y="365" width="7" height="1" fill="#ff3c3c"/>
<rect x="997" y="357" width="1" height="9" fill="#ff3c3c"/>
<rect x="1003" y="357" width="1" height="9" fill="#ff3c3c"/>
<rect x="1009" y="344" width="1" height="4" fill="#ff3c3c"/>
<rect x="1009" y="354" width="1" height="2" fill="#ff3c3c"/>
<rect x="1006" y="348" width="7" height="1" fill="#ff3c3c"/>
<rect x="1006" y="353" width="7" height="1" fill="#ff3c3c"/>
<rect x="1006" y="348" width="1" height="6" fill="#ff3c3c"/>
<rect x="1012" y="348" width="1" height="6" fill="#ff3c3c"/>
<rect x="1018" y="349" width="1" height="16" fill="#00ffff"/>
<rect x="1015" y="349" width="7" height="13" fill="#00ffff"/>
<rect x="1026" y="352" width="1" height="3" fill="#ff3c3c"/>
<rect x="1026" y="372" width="1" height="4" fill="#ff3c3c"/>
<rect x="1023" y="355" width="7" height="1" fill="#ff3c3c"/>
<rect x="1023" y="371" width="7" height="1" fill="#ff3c3c"/>
<rect x="1023" y="355" width="1" height="17" fill="#ff3c3c"/>
<rect x="1029" y="355" width="1" height="17" fill="#ff3c3c"/>
<rect x="1035" y="367" width="1" height="6" fill="#ff3c3c"/>
<rect x="1032" y="358" width="7" height="1" fill="#ff3c3c"/>
<rect x="1032" y="366" width="7" height="1" fill="#ff3c3c"/>
<rect x="1032" y="358" width="1" height="9" fill="#ff3c3c"/>
<rect x="1038" y="358" width="1" height="9" fill="#ff3c3c"/>
<rect x="1044" y="357" width="1" height="3" fill="#ff3c3c"/>
<rect x="1044" y="364" width="1" height="3" fill="#ff3c3c"/>
<rect x="1041" y="360" width="7" height="1" fill="#ff3c3c"/>
<rect x="1041" y="363" width="7" height="1" fill="#ff3c3c"/>
<rect x="1041" y="360" width="1" height="4" fill="#ff3c3c"/>
<rect x="1047" y="360" width="1" height="4" fill="#ff3c3c"/>
<path fill="#ffffff" d="M837 522h4v1h-4zM848 522h6v1h-6zM915 522h3v1h-3zM190 611h4v1h-4zM230 611h2v1h-2zM128 595h3v1h-3zM472 595h3v1h-3zM1034 595h4v1h-4zM296 563h2v1h-2zM390 563h2v1h-2zM708 447h3v1h-3zM722 447h3v1h-3zM124 594h4v1h-4zM469 594h3v1h-3zM570 594h2v1h-2zM1031 594h3v1h-3zM157 604h7v1h-7zM742 458h2v1h-2zM52 578h3v1h-3zM423 578h2v1h-2zM338 549h3v1h-3zM363 549h2v1h-2zM779 485h2v1h-2zM926 526h3v1h-3zM332 551h3v1h-3zM367 551h2v1h-2zM775 482h2v1h-2zM134 597h3v1h-3zM481 597h8v1h-8zM1042 597h3v1h-3zM350 546h6v1h-6zM969 546h2v1h-2zM797 497h2v1h-2zM826 517h2v1h-2zM874 517h18v1h-18zM131 596h3v1h-3zM250 596h2v1h-2zM475 596h6v1h-6zM567 596h2v1h-2zM1038 596h4v1h-4zM309 558h3v1h-3zM380 558h2v1h-2zM809 506h2v1h-2zM79 586h6v1h-6zM263 586h2v1h-2zM444 586h4v1h-4zM1014 586h2v1h-2zM292 565h2v1h-2zM394 565h2v1h-2zM300 561h3v1h-3zM386 561h2v1h-2zM828 518h2v1h-2zM865 518h9v1h-9zM892 518h8v1h-8zM312 557h3v1h-3zM378 557h2v1h-2zM114 592h6v1h-6zM463 592h3v1h-3zM1026 592h2v1h-2zM194 612h5v1h-5zM228 612h2v1h-2zM303 560h3v1h-3zM384 560h2v1h-2zM175 608h3v1h-3zM149 602h2v1h-2zM524 602h18v1h-18zM551 602h5v1h-5zM739 456h2v1h-2zM105 591h9v1h-9zM460 591h3v1h-3zM574 591h2v1h-2zM1024 591h2v1h-2zM344 547h6v1h-6zM356 547h4v1h-4zM937 529h4v1h-4zM85 587h4v1h-4zM448 587h4v1h-4zM1016 587h2v1h-2zM960 539h2v1h-2zM210 615h14v1h-14zM33 569h2v1h-2zM284 569h2v1h-2zM403 569h2v1h-2zM89 588h5v1h-5zM452 588h3v1h-3zM578 588h2v1h-2zM1018 588h2v1h-2zM832 520h2v1h-2zM857 520h2v1h-2zM907 520h4v1h-4zM137 598h3v1h-3zM489 598h7v1h-7zM564 598h2v1h-2zM812 508h2v1h-2zM841 523h7v1h-7zM918 523h2v1h-2zM791 494h2v1h-2zM120 593h4v1h-4zM254 593h2v1h-2zM466 593h3v1h-3zM1028 593h3v1h-3zM58 580h3v1h-3zM270 580h2v1h-2zM428 580h3v1h-3zM1003 580h2v1h-2zM306 559h3v1h-3zM382 559h2v1h-2zM321 554h4v1h-4zM372 554h2v1h-2zM35 570h2v1h-2zM405 570h3v1h-3zM98 590h7v1h-7zM457 590h3v1h-3zM1022 590h2v1h-2zM290 566h2v1h-2zM396 566h3v1h-3zM140 599h3v1h-3zM496 599h4v1h-4zM562 599h2v1h-2zM929 527h4v1h-4zM146 601h3v1h-3zM507 601h17v1h-17zM556 601h3v1h-3zM64 582h3v1h-3zM434 582h2v1h-2zM1007 582h2v1h-2zM61 581h3v1h-3zM431 581h3v1h-3zM1005 581h2v1h-2zM787 491h2v1h-2zM801 500h2v1h-2zM37 571h2v1h-2zM408 571h3v1h-3zM933 528h4v1h-4zM45 575h2v1h-2zM276 575h2v1h-2zM418 575h2v1h-2zM329 552h3v1h-3zM369 552h2v1h-2zM711 446h11v1h-11zM178 609h6v1h-6zM233 609h2v1h-2zM184 610h6v1h-6zM294 564h2v1h-2zM392 564h2v1h-2zM31 568h2v1h-2zM286 568h2v1h-2zM401 568h2v1h-2zM341 548h3v1h-3zM360 548h3v1h-3zM47 576h2v1h-2zM70 584h3v1h-3zM438 584h2v1h-2zM1010 584h2v1h-2zM172 607h3v1h-3zM317 555h4v1h-4zM374 555h2v1h-2zM43 574h2v1h-2zM416 574h2v1h-2zM995 574h2v1h-2zM830 519h2v1h-2zM859 519h6v1h-6zM900 519h7v1h-7zM335 550h3v1h-3zM365 550h2v1h-2zM73 585h6v1h-6zM440 585h4v1h-4zM1012 585h2v1h-2zM164 605h4v1h-4zM55 579h3v1h-3zM425 579h3v1h-3zM1001 579h2v1h-2zM298 562h2v1h-2zM388 562h2v1h-2zM954 535h2v1h-2zM143 600h3v1h-3zM245 600h2v1h-2zM500 600h7v1h-7zM559 600h3v1h-3zM325 553h4v1h-4zM834 521h3v1h-3zM854 521h3v1h-3zM911 521h4v1h-4zM771 479h2v1h-2zM783 488h2v1h-2zM39 572h2v1h-2zM280 572h2v1h-2zM411 572h3v1h-3zM700 450h2v1h-2zM730 450h2v1h-2zM696 452h2v1h-2zM733 452h2v1h-2zM805 503h2v1h-2zM41 573h2v1h-2zM414 573h2v1h-2zM67 583h3v1h-3zM436 583h2v1h-2zM694 453h2v1h-2zM941 530h3v1h-3zM963 541h2v1h-2zM768 477h2v1h-2zM199 613h4v1h-4zM226 613h2v1h-2zM151 603h6v1h-6zM241 603h2v1h-2zM542 603h9v1h-9zM203 614h7v1h-7zM224 614h2v1h-2zM944 531h3v1h-3zM49 577h3v1h-3zM421 577h2v1h-2zM795 496h2v1h-2zM288 567h2v1h-2zM399 567h2v1h-2zM920 524h3v1h-3zM168 606h4v1h-4zM237 606h2v1h-2zM823 515h2v1h-2zM762 473h2v1h-2zM702 449h3v1h-3zM728 449h2v1h-2zM815 510h2v1h-2zM952 534h2v1h-2zM745 460h2v1h-2zM759 471h2v1h-2zM94 589h4v1h-4zM259 589h2v1h-2zM455 589h2v1h-2zM1020 589h2v1h-2zM957 537h2v1h-2zM756 469h2v1h-2zM947 532h3v1h-3zM818 512h2v1h-2zM950 533h2v1h-2zM793 495h2v1h-2zM698 451h2v1h-2zM923 525h3v1h-3zM736 454h2v1h-2zM315 556h2v1h-2zM376 556h2v1h-2zM765 475h2v1h-2zM705 448h3v1h-3zM725 448h3v1h-3zM750 464h2v1h-2zM820 513h2v1h-2zM643 511h1v1h-1zM253 594h1v1h-1zM646 507h1v2h-1zM611 549h1v1h-1zM666 485h1v1h-1zM15 550h1v2h-1zM738 455h1v1h-1zM21 558h1v1h-1zM983 560h1v1h-1zM622 535h1v2h-1zM677 472h1v1h-1zM619 539h1v1h-1zM635 520h1v1h-1zM655 497h1v2h-1zM753 466h1v1h-1zM658 494h1v1h-1zM28 565h1v1h-1zM754 467h1v1h-1zM29 566h1v1h-1zM268 582h1v1h-1zM685 462h1v1h-1zM630 526h1v1h-1zM653 500h1v1h-1zM975 551h1v1h-1zM997 575h1v1h-1zM599 564h1v2h-1zM14 549h1v1h-1zM232 610h1v1h-1zM982 559h1v1h-1zM998 576h1v1h-1zM236 607h1v1h-1zM606 555h1v1h-1zM591 574h1v2h-1zM594 571h1v1h-1zM638 516h1v1h-1zM371 553h1v1h-1zM275 576h1v1h-1zM420 576h1v1h-1zM614 545h1v2h-1zM279 573h1v1h-1zM692 455h1v1h-1zM735 453h1v1h-1zM583 584h1v1h-1zM650 503h1v1h-1zM673 477h1v1h-1zM749 463h1v1h-1zM689 458h1v1h-1zM240 604h1v1h-1zM959 538h1v1h-1zM782 487h1v1h-1zM645 509h1v1h-1zM244 601h1v1h-1zM648 505h1v1h-1zM992 571h1v1h-1zM993 572h1v1h-1zM589 577h1v1h-1zM656 496h1v1h-1zM13 548h1v1h-1zM283 570h1v1h-1zM586 580h1v1h-1zM764 474h1v1h-1zM602 560h1v2h-1zM978 554h1v2h-1zM266 584h1v1h-1zM637 517h1v2h-1zM748 462h1v1h-1zM597 567h1v1h-1zM985 562h1v2h-1zM800 499h1v1h-1zM23 560h1v1h-1zM566 597h1v1h-1zM24 561h1v1h-1zM668 483h1v1h-1zM613 547h1v1h-1zM5 537h1v2h-1zM744 459h1v1h-1zM6 539h1v1h-1zM684 463h1v1h-1zM30 567h1v1h-1zM605 556h1v2h-1zM608 553h1v1h-1zM640 514h1v1h-1zM778 484h1v1h-1zM621 537h1v1h-1zM676 473h1v1h-1zM679 469h1v2h-1zM16 552h1v1h-1zM999 577h1v1h-1zM660 492h1v1h-1zM581 586h1v1h-1zM1000 578h1v1h-1zM616 543h1v1h-1zM632 523h1v1h-1zM814 509h1v1h-1zM691 456h1v1h-1zM755 468h1v1h-1zM774 481h1v1h-1zM624 533h1v1h-1zM777 483h1v1h-1zM596 568h1v2h-1zM235 608h1v1h-1zM663 488h1v2h-1zM984 561h1v1h-1zM966 543h1v1h-1zM644 510h1v1h-1zM811 507h1v1h-1zM257 591h1v1h-1zM585 581h1v2h-1zM652 501h1v1h-1zM4 536h1v1h-1zM675 474h1v2h-1zM261 588h1v1h-1zM976 552h1v1h-1zM977 553h1v1h-1zM265 585h1v1h-1zM627 529h1v1h-1zM670 480h1v2h-1zM19 555h1v2h-1zM807 504h1v1h-1zM683 464h1v2h-1zM686 461h1v1h-1zM987 565h1v1h-1zM588 578h1v1h-1zM773 480h1v1h-1zM678 471h1v1h-1zM732 451h1v1h-1zM26 563h1v1h-1zM604 558h1v1h-1zM994 573h1v1h-1zM8 541h1v2h-1zM572 593h1v1h-1zM272 579h1v1h-1zM965 542h1v1h-1zM576 590h1v1h-1zM580 587h1v1h-1zM647 506h1v1h-1zM612 548h1v1h-1zM18 554h1v1h-1zM615 544h1v1h-1zM248 598h1v1h-1zM642 512h1v1h-1zM607 554h1v1h-1zM662 490h1v1h-1zM25 562h1v1h-1zM665 486h1v1h-1zM623 534h1v1h-1zM7 540h1v1h-1zM979 556h1v1h-1zM825 516h1v1h-1zM618 540h1v2h-1zM956 536h1v1h-1zM986 564h1v1h-1zM631 524h1v2h-1zM634 521h1v1h-1zM654 499h1v1h-1zM252 595h1v1h-1zM693 454h1v1h-1zM761 472h1v1h-1zM1009 583h1v1h-1zM681 467h1v1h-1zM626 530h1v2h-1zM971 547h1v1h-1zM629 527h1v1h-1zM256 592h1v1h-1zM972 548h1v1h-1zM610 550h1v1h-1zM595 570h1v1h-1zM17 553h1v1h-1zM590 576h1v1h-1zM657 495h1v1h-1zM274 577h1v1h-1zM741 457h1v1h-1zM989 567h1v2h-1zM598 566h1v1h-1zM267 583h1v1h-1zM582 585h1v1h-1zM649 504h1v1h-1zM669 482h1v1h-1zM10 544h1v1h-1zM239 605h1v1h-1zM243 602h1v1h-1zM967 544h1v1h-1zM790 493h1v1h-1zM278 574h1v1h-1zM641 513h1v1h-1zM661 491h1v1h-1zM282 571h1v1h-1zM601 562h1v1h-1zM688 459h1v1h-1zM9 543h1v1h-1zM672 478h1v1h-1zM593 572h1v1h-1zM786 490h1v1h-1zM789 492h1v1h-1zM20 557h1v1h-1zM808 505h1v1h-1zM609 551h1v2h-1zM667 484h1v1h-1zM770 478h1v1h-1zM988 566h1v1h-1zM680 468h1v1h-1zM625 532h1v1h-1zM27 564h1v1h-1zM636 519h1v1h-1zM962 540h1v1h-1zM617 542h1v1h-1zM620 538h1v1h-1zM974 550h1v1h-1zM633 522h1v1h-1zM980 557h1v1h-1zM569 595h1v1h-1zM269 581h1v1h-1zM981 558h1v1h-1zM258 590h1v1h-1zM247 599h1v1h-1zM767 476h1v1h-1zM628 528h1v1h-1zM573 592h1v1h-1zM262 587h1v1h-1zM664 487h1v1h-1zM577 589h1v1h-1zM752 465h1v1h-1zM803 501h1v1h-1zM639 515h1v1h-1zM659 493h1v1h-1zM785 489h1v1h-1zM804 502h1v1h-1zM973 549h1v1h-1zM11 545h1v2h-1zM12 547h1v1h-1zM273 578h1v1h-1zM690 457h1v1h-1zM584 583h1v1h-1zM651 502h1v1h-1zM674 476h1v1h-1zM991 570h1v1h-1zM781 486h1v1h-1zM687 460h1v1h-1zM822 514h1v1h-1zM592 573h1v1h-1zM817 511h1v1h-1zM682 466h1v1h-1zM747 461h1v1h-1zM587 579h1v1h-1zM758 470h1v1h-1zM799 498h1v1h-1zM968 545h1v1h-1zM22 559h1v1h-1zM990 569h1v1h-1zM600 563h1v1h-1zM603 559h1v1h-1zM671 479h1v1h-1zM249 597h1v1h-1z"/>
<path fill="#ffff00" d="M116 589h4v1h-4zM473 589h2v1h-2zM1043 589h2v1h-2zM335 557h3v1h-3zM390 557h3v1h-3zM993 557h2v1h-2zM155 599h4v1h-4zM522 599h4v1h-4zM570 599h3v1h-3zM66 573h2v1h-2zM299 573h2v1h-2zM431 573h3v1h-3zM350 552h2v1h-2zM374 552h4v1h-4zM857 518h52v1h-52zM916 520h4v1h-4zM159 600h5v1h-5zM258 600h2v1h-2zM526 600h16v1h-16zM566 600h4v1h-4zM58 569h2v1h-2zM306 569h2v1h-2zM422 569h3v1h-3zM138 594h4v1h-4zM491 594h5v1h-5zM352 551h6v1h-6zM367 551h7v1h-7zM74 577h2v1h-2zM440 577h3v1h-3zM1019 577h2v1h-2zM94 584h4v1h-4zM281 584h2v1h-2zM460 584h3v1h-3zM593 584h2v1h-2zM1032 584h2v1h-2zM783 477h2v1h-2zM68 574h2v1h-2zM297 574h2v1h-2zM434 574h2v1h-2zM1015 574h2v1h-2zM976 542h2v1h-2zM803 490h2v1h-2zM845 515h3v1h-3zM312 566h3v1h-3zM414 566h3v1h-3zM164 601h4v1h-4zM256 601h2v1h-2zM542 601h9v1h-9zM559 601h7v1h-7zM723 453h4v1h-4zM734 453h6v1h-6zM806 492h2v1h-2zM142 595h4v1h-4zM496 595h4v1h-4zM579 595h2v1h-2zM34 550h2v1h-2zM358 550h9v1h-9zM76 578h3v1h-3zM290 578h2v1h-2zM443 578h3v1h-3zM1021 578h2v1h-2zM217 613h4v1h-4zM225 613h4v1h-4zM928 523h5v1h-5zM848 516h3v1h-3zM800 488h2v1h-2zM54 567h2v1h-2zM310 567h2v1h-2zM417 567h3v1h-3zM1006 567h2v1h-2zM341 555h3v1h-3zM385 555h2v1h-2zM120 590h4v1h-4zM272 590h2v1h-2zM475 590h4v1h-4zM586 590h2v1h-2zM842 514h3v1h-3zM194 608h5v1h-5zM242 608h2v1h-2zM168 602h5v1h-5zM254 602h2v1h-2zM551 602h8v1h-8zM177 604h5v1h-5zM250 604h2v1h-2zM331 559h2v1h-2zM396 559h3v1h-3zM727 452h7v1h-7zM933 524h4v1h-4zM851 517h6v1h-6zM944 527h3v1h-3zM344 554h3v1h-3zM382 554h3v1h-3zM780 475h2v1h-2zM958 532h2v1h-2zM834 510h2v1h-2zM199 609h4v1h-4zM239 609h3v1h-3zM56 568h2v1h-2zM308 568h2v1h-2zM420 568h2v1h-2zM755 460h2v1h-2zM947 528h3v1h-3zM347 553h3v1h-3zM378 553h4v1h-4zM51 565h2v1h-2zM315 565h2v1h-2zM411 565h3v1h-3zM190 607h4v1h-4zM244 607h2v1h-2zM107 587h5v1h-5zM276 587h2v1h-2zM469 587h2v1h-2zM1039 587h2v1h-2zM317 564h3v1h-3zM408 564h3v1h-3zM1002 564h2v1h-2zM133 593h5v1h-5zM268 593h2v1h-2zM487 593h4v1h-4zM582 593h2v1h-2zM48 563h2v1h-2zM320 563h3v1h-3zM405 563h3v1h-3zM970 538h2v1h-2zM124 591h5v1h-5zM479 591h4v1h-4zM173 603h4v1h-4zM252 603h2v1h-2zM774 471h2v1h-2zM719 454h4v1h-4zM740 454h3v1h-3zM62 571h2v1h-2zM302 571h2v1h-2zM427 571h2v1h-2zM1011 571h2v1h-2zM146 596h3v1h-3zM264 596h2v1h-2zM500 596h7v1h-7zM577 596h2v1h-2zM72 576h2v1h-2zM293 576h2v1h-2zM438 576h2v1h-2zM602 576h2v1h-2zM84 581h3v1h-3zM452 581h3v1h-3zM1026 581h2v1h-2zM937 525h4v1h-4zM70 575h2v1h-2zM295 575h2v1h-2zM436 575h2v1h-2zM208 611h4v1h-4zM233 611h3v1h-3zM98 585h5v1h-5zM463 585h3v1h-3zM1034 585h3v1h-3zM333 558h2v1h-2zM393 558h3v1h-3zM81 580h3v1h-3zM287 580h2v1h-2zM449 580h3v1h-3zM1024 580h2v1h-2zM941 526h3v1h-3zM909 519h7v1h-7zM791 483h2v1h-2zM338 556h3v1h-3zM387 556h3v1h-3zM221 614h4v1h-4zM838 512h2v1h-2zM182 605h4v1h-4zM248 605h2v1h-2zM968 537h2v1h-2zM79 579h2v1h-2zM446 579h3v1h-3zM103 586h4v1h-4zM278 586h2v1h-2zM466 586h3v1h-3zM1037 586h2v1h-2zM323 562h3v1h-3zM403 562h2v1h-2zM714 456h3v1h-3zM746 456h3v1h-3zM149 597h2v1h-2zM507 597h9v1h-9zM575 597h2v1h-2zM129 592h4v1h-4zM483 592h4v1h-4zM203 610h5v1h-5zM236 610h3v1h-3zM787 480h2v1h-2zM151 598h4v1h-4zM261 598h2v1h-2zM516 598h6v1h-6zM573 598h2v1h-2zM797 486h2v1h-2zM90 583h4v1h-4zM457 583h3v1h-3zM1030 583h2v1h-2zM920 521h4v1h-4zM329 560h2v1h-2zM399 560h2v1h-2zM997 560h2v1h-2zM186 606h4v1h-4zM246 606h2v1h-2zM698 469h2v1h-2zM771 469h2v1h-2zM707 461h2v1h-2zM757 461h2v1h-2zM953 530h2v1h-2zM793 484h2v1h-2zM751 458h2v1h-2zM87 582h3v1h-3zM284 582h2v1h-2zM455 582h2v1h-2zM1028 582h2v1h-2zM768 467h2v1h-2zM955 531h3v1h-3zM811 495h2v1h-2zM763 464h2v1h-2zM212 612h5v1h-5zM229 612h4v1h-4zM818 499h2v1h-2zM962 534h2v1h-2zM795 485h2v1h-2zM815 497h2v1h-2zM712 457h2v1h-2zM749 457h2v1h-2zM966 536h2v1h-2zM112 588h4v1h-4zM471 588h2v1h-2zM1041 588h2v1h-2zM717 455h2v1h-2zM743 455h3v1h-3zM972 539h2v1h-2zM809 494h2v1h-2zM950 529h3v1h-3zM326 561h3v1h-3zM401 561h2v1h-2zM980 545h2v1h-2zM826 505h2v1h-2zM964 535h2v1h-2zM840 513h2v1h-2zM64 572h2v1h-2zM429 572h2v1h-2zM829 507h2v1h-2zM777 473h2v1h-2zM60 570h2v1h-2zM304 570h2v1h-2zM425 570h2v1h-2zM813 496h2v1h-2zM960 533h2v1h-2zM822 502h2v1h-2zM924 522h4v1h-4zM765 465h2v1h-2zM836 511h2v1h-2zM761 463h2v1h-2zM753 459h2v1h-2zM832 509h2v1h-2zM759 462h2v1h-2zM37 552h1v1h-1zM689 478h1v2h-1zM26 542h1v1h-1zM681 487h1v2h-1zM991 555h1v1h-1zM4 514h1v1h-1zM44 559h1v1h-1zM1005 566h1v1h-1zM14 526h1v2h-1zM622 554h1v2h-1zM642 532h1v1h-1zM662 510h1v1h-1zM665 506h1v1h-1zM709 460h1v1h-1zM15 528h1v1h-1zM614 564h1v1h-1zM637 537h1v2h-1zM696 471h1v1h-1zM25 540h1v2h-1zM802 489h1v1h-1zM274 589h1v1h-1zM286 581h1v1h-1zM990 554h1v1h-1zM824 503h1v1h-1zM1001 563h1v1h-1zM776 472h1v1h-1zM979 544h1v1h-1zM825 504h1v1h-1zM606 573h1v1h-1zM33 549h1v1h-1zM676 493h1v1h-1zM18 532h1v1h-1zM660 512h1v1h-1zM590 587h1v1h-1zM700 468h1v1h-1zM657 515h1v1h-1zM975 541h1v1h-1zM32 548h1v1h-1zM263 597h1v1h-1zM632 543h1v1h-1zM790 482h1v1h-1zM7 518h1v1h-1zM688 480h1v1h-1zM691 476h1v1h-1zM629 546h1v1h-1zM597 581h1v1h-1zM974 540h1v1h-1zM820 500h1v1h-1zM621 556h1v1h-1zM644 530h1v1h-1zM6 516h1v2h-1zM711 458h1v1h-1zM680 489h1v1h-1zM767 466h1v1h-1zM786 479h1v1h-1zM616 562h1v1h-1zM652 521h1v1h-1zM675 494h1v2h-1zM17 530h1v2h-1zM613 565h1v1h-1zM50 564h1v1h-1zM624 552h1v1h-1zM985 549h1v1h-1zM39 554h1v1h-1zM608 571h1v1h-1zM683 485h1v1h-1zM673 497h1v1h-1zM986 550h1v1h-1zM667 504h1v1h-1zM5 515h1v1h-1zM28 544h1v1h-1zM992 556h1v1h-1zM636 539h1v1h-1zM808 493h1v1h-1zM16 529h1v1h-1zM695 472h1v1h-1zM611 567h1v2h-1zM38 553h1v1h-1zM782 476h1v1h-1zM647 526h1v1h-1zM785 478h1v1h-1zM27 543h1v1h-1zM670 500h1v2h-1zM628 547h1v2h-1zM45 560h1v1h-1zM599 579h1v1h-1zM46 561h1v1h-1zM592 585h1v1h-1zM702 466h1v1h-1zM581 594h1v1h-1zM639 535h1v1h-1zM659 513h1v1h-1zM596 582h1v1h-1zM20 534h1v2h-1zM1018 576h1v1h-1zM634 541h1v1h-1zM654 519h1v1h-1zM693 474h1v1h-1zM615 563h1v1h-1zM690 477h1v1h-1zM674 496h1v1h-1zM799 487h1v1h-1zM1017 575h1v1h-1zM646 527h1v2h-1zM623 553h1v1h-1zM19 533h1v1h-1zM618 559h1v2h-1zM682 486h1v1h-1zM821 501h1v1h-1zM987 551h1v1h-1zM631 544h1v1h-1zM267 594h1v1h-1zM8 519h1v1h-1zM1013 572h1v1h-1zM626 550h1v1h-1zM30 546h1v1h-1zM649 524h1v1h-1zM669 502h1v1h-1zM610 569h1v1h-1zM260 599h1v1h-1zM685 483h1v1h-1zM607 572h1v1h-1zM773 470h1v1h-1zM666 505h1v1h-1zM40 555h1v1h-1zM704 464h1v1h-1zM641 533h1v1h-1zM41 556h1v1h-1zM661 511h1v1h-1zM271 591h1v1h-1zM677 492h1v1h-1zM697 470h1v1h-1zM283 583h1v1h-1zM275 588h1v1h-1zM47 562h1v1h-1zM672 498h1v1h-1zM817 498h1v1h-1zM11 522h1v2h-1zM653 520h1v1h-1zM1008 568h1v1h-1zM22 537h1v1h-1zM601 577h1v1h-1zM598 580h1v1h-1zM1009 569h1v1h-1zM29 545h1v1h-1zM591 586h1v1h-1zM633 542h1v1h-1zM301 572h1v1h-1zM21 536h1v1h-1zM289 579h1v1h-1zM692 475h1v1h-1zM605 574h1v1h-1zM831 508h1v1h-1zM664 507h1v1h-1zM687 481h1v1h-1zM805 491h1v1h-1zM625 551h1v1h-1zM645 529h1v1h-1zM1023 579h1v1h-1zM648 525h1v1h-1zM585 591h1v1h-1zM10 521h1v1h-1zM684 484h1v1h-1zM1004 565h1v1h-1zM779 474h1v1h-1zM617 561h1v1h-1zM620 557h1v1h-1zM589 588h1v1h-1zM656 516h1v1h-1zM679 490h1v1h-1zM982 546h1v1h-1zM36 551h1v1h-1zM266 595h1v1h-1zM703 465h1v1h-1zM651 522h1v1h-1zM270 592h1v1h-1zM609 570h1v1h-1zM989 553h1v1h-1zM43 558h1v1h-1zM978 543h1v1h-1zM9 520h1v1h-1zM668 503h1v1h-1zM706 462h1v1h-1zM663 508h1v2h-1zM710 459h1v1h-1zM640 534h1v1h-1zM988 552h1v1h-1zM999 561h1v1h-1zM612 566h1v1h-1zM1000 562h1v1h-1zM42 557h1v1h-1zM1014 573h1v1h-1zM671 499h1v1h-1zM31 547h1v1h-1zM694 473h1v1h-1zM770 468h1v1h-1zM643 531h1v1h-1zM600 578h1v1h-1zM604 575h1v1h-1zM23 538h1v1h-1zM686 482h1v1h-1zM53 566h1v1h-1zM24 539h1v1h-1zM701 467h1v1h-1zM635 540h1v1h-1zM655 517h1v2h-1zM658 514h1v1h-1zM584 592h1v1h-1zM12 524h1v1h-1zM789 481h1v1h-1zM995 558h1v1h-1zM13 525h1v1h-1zM996 559h1v1h-1zM1010 570h1v1h-1zM627 549h1v1h-1zM638 536h1v1h-1zM595 583h1v1h-1zM619 558h1v1h-1zM588 589h1v1h-1zM678 491h1v1h-1zM705 463h1v1h-1zM828 506h1v1h-1zM280 585h1v1h-1zM983 547h1v1h-1zM630 545h1v1h-1zM292 577h1v1h-1zM650 523h1v1h-1zM984 548h1v1h-1z"/>
<path fill="#ff00ff" d="M862 522h2v1h-2zM906 522h2v1h-2zM27 605h2v1h-2zM45 605h2v1h-2zM133 605h2v1h-2zM461 605h4v1h-4zM498 605h9v1h-9zM551 605h2v1h-2zM995 605h2v1h-2zM146 611h3v1h-3zM1014 611h3v1h-3zM287 543h2v1h-2zM832 543h4v1h-4zM949 543h2v1h-2zM414 588h3v1h-3zM922 531h2v1h-2zM72 601h5v1h-5zM124 601h3v1h-3zM449 601h3v1h-3zM184 619h8v1h-8zM221 619h2v1h-2zM295 540h4v1h-4zM306 540h17v1h-17zM359 540h2v1h-2zM823 540h2v1h-2zM842 540h2v1h-2zM943 540h2v1h-2zM693 417h12v1h-12zM421 591h2v1h-2zM151 613h13v1h-13zM1021 613h4v1h-4zM339 536h4v1h-4zM847 536h2v1h-2zM930 536h3v1h-3zM412 587h2v1h-2zM23 602h2v1h-2zM68 602h4v1h-4zM127 602h2v1h-2zM452 602h3v1h-3zM403 583h2v1h-2zM791 516h2v1h-2zM81 599h6v1h-6zM114 599h6v1h-6zM443 599h3v1h-3zM149 612h2v1h-2zM1017 612h4v1h-4zM35 608h6v1h-6zM139 608h2v1h-2zM474 608h7v1h-7zM1000 608h5v1h-5zM291 541h4v1h-4zM825 541h3v1h-3zM839 541h3v1h-3zM945 541h2v1h-2zM410 586h2v1h-2zM440 598h3v1h-3zM401 582h2v1h-2zM77 600h4v1h-4zM87 600h27v1h-27zM120 600h4v1h-4zM446 600h3v1h-3zM52 603h16v1h-16zM129 603h2v1h-2zM455 603h2v1h-2zM992 603h2v1h-2zM405 584h3v1h-3zM793 517h2v1h-2zM876 517h14v1h-14zM192 620h9v1h-9zM217 620h4v1h-4zM397 580h2v1h-2zM43 606h2v1h-2zM135 606h2v1h-2zM465 606h5v1h-5zM489 606h9v1h-9zM507 606h35v1h-35zM548 606h3v1h-3zM786 513h2v1h-2zM795 518h2v1h-2zM872 518h4v1h-4zM890 518h4v1h-4zM168 615h4v1h-4zM1031 615h9v1h-9zM201 621h16v1h-16zM175 617h3v1h-3zM47 604h5v1h-5zM131 604h2v1h-2zM457 604h4v1h-4zM553 604h2v1h-2zM408 585h2v1h-2zM30 607h5v1h-5zM41 607h2v1h-2zM137 607h2v1h-2zM470 607h4v1h-4zM481 607h8v1h-8zM542 607h6v1h-6zM998 607h2v1h-2zM953 546h2v1h-2zM330 538h4v1h-4zM819 538h2v1h-2zM937 538h4v1h-4zM343 535h11v1h-11zM928 535h2v1h-2zM431 595h3v1h-3zM689 419h2v1h-2zM708 419h3v1h-3zM685 421h2v1h-2zM860 523h2v1h-2zM908 523h2v1h-2zM399 581h2v1h-2zM691 418h2v1h-2zM705 418h3v1h-3zM334 537h5v1h-5zM355 537h2v1h-2zM817 537h2v1h-2zM933 537h4v1h-4zM164 614h4v1h-4zM1025 614h6v1h-6zM1040 614h5v1h-5zM797 519h2v1h-2zM868 519h4v1h-4zM894 519h4v1h-4zM283 545h2v1h-2zM423 592h2v1h-2zM425 593h3v1h-3zM784 512h2v1h-2zM925 533h2v1h-2zM914 526h2v1h-2zM419 590h2v1h-2zM178 618h6v1h-6zM395 579h2v1h-2zM172 616h3v1h-3zM434 596h3v1h-3zM428 594h3v1h-3zM143 610h3v1h-3zM1011 610h3v1h-3zM276 550h2v1h-2zM392 577h2v1h-2zM437 597h3v1h-3zM280 547h2v1h-2zM866 520h2v1h-2zM898 520h4v1h-4zM299 539h7v1h-7zM323 539h7v1h-7zM821 539h2v1h-2zM941 539h2v1h-2zM389 575h2v1h-2zM782 511h2v1h-2zM289 542h2v1h-2zM828 542h4v1h-4zM836 542h3v1h-3zM947 542h2v1h-2zM864 521h2v1h-2zM902 521h4v1h-4zM141 609h2v1h-2zM1005 609h6v1h-6zM912 525h2v1h-2zM285 544h2v1h-2zM803 524h2v1h-2zM910 524h2v1h-2zM417 589h2v1h-2zM788 514h2v1h-2zM687 420h2v1h-2zM711 420h2v1h-2zM916 527h2v1h-2zM919 529h2v1h-2zM230 611h1v1h-1zM253 576h1v1h-1zM568 588h1v1h-1zM644 470h1v1h-1zM600 531h1v2h-1zM13 591h1v1h-1zM721 430h1v1h-1zM989 598h1v2h-1zM361 541h1v1h-1zM245 586h1v2h-1zM560 598h1v1h-1zM248 582h1v1h-1zM990 600h1v2h-1zM237 599h1v2h-1zM608 516h1v2h-1zM746 468h1v2h-1zM754 480h1v2h-1zM775 504h1v1h-1zM617 503h1v1h-1zM675 434h1v2h-1zM620 499h1v2h-1zM850 534h1v1h-1zM731 443h1v2h-1zM599 533h1v2h-1zM760 488h1v1h-1zM750 474h1v2h-1zM647 467h1v1h-1zM670 441h1v1h-1zM615 505h1v2h-1zM713 421h1v1h-1zM790 515h1v1h-1zM604 523h1v2h-1zM233 606h1v2h-1zM571 584h1v1h-1zM382 568h1v1h-1zM5 581h1v1h-1zM714 422h1v1h-1zM595 541h1v1h-1zM628 489h1v1h-1zM6 582h1v2h-1zM587 555h1v2h-1zM816 536h1v1h-1zM241 592h1v2h-1zM768 496h1v2h-1zM611 511h1v2h-1zM749 473h1v1h-1zM678 430h1v2h-1zM603 525h1v2h-1zM986 592h1v2h-1zM967 561h1v1h-1zM659 454h1v1h-1zM927 534h1v1h-1zM591 547h1v2h-1zM724 434h1v1h-1zM753 479h1v1h-1zM978 578h1v2h-1zM374 559h1v1h-1zM982 585h1v2h-1zM636 479h1v1h-1zM225 616h1v1h-1zM952 545h1v1h-1zM268 559h1v1h-1zM17 595h1v2h-1zM971 566h1v2h-1zM375 560h1v1h-1zM564 593h1v2h-1zM654 460h1v1h-1zM555 603h1v1h-1zM854 530h1v1h-1zM244 588h1v1h-1zM582 565h1v2h-1zM988 596h1v2h-1zM651 463h1v1h-1zM960 552h1v2h-1zM642 472h1v1h-1zM260 568h1v1h-1zM388 574h1v1h-1zM985 590h1v2h-1zM966 559h1v2h-1zM918 528h1v1h-1zM252 577h1v2h-1zM232 608h1v2h-1zM567 589h1v2h-1zM570 585h1v2h-1zM639 475h1v1h-1zM16 594h1v1h-1zM594 542h1v2h-1zM857 526h1v1h-1zM716 424h1v2h-1zM607 518h1v1h-1zM631 485h1v1h-1zM634 481h1v1h-1zM574 579h1v2h-1zM263 565h1v1h-1zM619 501h1v1h-1zM770 499h1v1h-1zM590 549h1v2h-1zM723 433h1v1h-1zM752 477h1v2h-1zM559 599h1v1h-1zM959 551h1v1h-1zM771 500h1v1h-1zM669 442h1v2h-1zM845 538h1v1h-1zM363 543h1v2h-1zM15 593h1v1h-1zM748 471h1v2h-1zM981 583h1v2h-1zM983 587h1v1h-1zM282 546h1v1h-1zM271 555h1v1h-1zM970 565h1v1h-1zM586 557h1v2h-1zM255 574h1v1h-1zM646 468h1v1h-1zM666 446h1v1h-1zM240 594h1v1h-1zM243 589h1v2h-1zM974 571h1v1h-1zM762 490h1v1h-1zM778 507h1v1h-1zM579 571h1v2h-1zM811 531h1v1h-1zM763 491h1v1h-1zM247 583h1v2h-1zM7 584h1v1h-1zM250 580h1v1h-1zM661 452h1v1h-1zM715 423h1v1h-1zM610 513h1v2h-1zM622 497h1v1h-1zM227 614h1v1h-1zM8 585h1v1h-1zM737 455h1v2h-1zM852 532h1v1h-1zM577 574h1v2h-1zM800 521h1v1h-1zM722 431h1v2h-1zM849 535h1v1h-1zM984 588h1v2h-1zM598 535h1v2h-1zM751 476h1v1h-1zM741 461h1v2h-1zM987 594h1v2h-1zM614 507h1v1h-1zM672 438h1v2h-1zM362 542h1v1h-1zM969 564h1v1h-1zM681 426h1v2h-1zM977 576h1v2h-1zM684 422h1v2h-1zM980 581h1v2h-1zM755 482h1v1h-1zM18 597h1v1h-1zM630 486h1v2h-1zM973 569h1v2h-1zM573 581h1v2h-1zM777 506h1v1h-1zM653 461h1v1h-1zM810 530h1v1h-1zM377 562h1v1h-1zM799 520h1v1h-1zM602 527h1v2h-1zM625 493h1v2h-1zM383 569h1v1h-1zM384 570h1v1h-1zM585 559h1v2h-1zM641 473h1v1h-1zM270 556h1v2h-1zM736 453h1v2h-1zM365 546h1v2h-1zM962 555h1v1h-1zM11 588h1v2h-1zM366 548h1v1h-1zM968 562h1v2h-1zM976 574h1v2h-1zM581 567h1v2h-1zM859 524h1v1h-1zM376 561h1v1h-1zM561 597h1v1h-1zM597 537h1v2h-1zM394 578h1v1h-1zM357 538h1v1h-1zM262 566h1v1h-1zM664 448h1v1h-1zM589 551h1v2h-1zM273 553h1v1h-1zM358 539h1v1h-1zM613 508h1v2h-1zM580 569h1v2h-1zM924 532h1v1h-1zM680 428h1v1h-1zM648 466h1v1h-1zM979 580h1v1h-1zM740 460h1v1h-1zM961 554h1v1h-1zM364 545h1v1h-1zM569 587h1v1h-1zM593 544h1v2h-1zM725 435h1v1h-1zM733 447h1v2h-1zM856 527h1v2h-1zM726 436h1v1h-1zM29 606h1v1h-1zM972 568h1v1h-1zM576 576h1v2h-1zM656 457h1v1h-1zM975 572h1v2h-1zM601 529h1v2h-1zM633 482h1v1h-1zM265 562h1v1h-1zM997 606h1v1h-1zM246 585h1v1h-1zM584 561h1v2h-1zM683 424h1v1h-1zM717 426h1v1h-1zM257 572h1v1h-1zM765 493h1v1h-1zM718 427h1v1h-1zM739 458h1v2h-1zM10 587h1v1h-1zM668 444h1v1h-1zM772 501h1v1h-1zM254 575h1v1h-1zM624 495h1v1h-1zM732 445h1v2h-1zM805 525h1v1h-1zM596 539h1v2h-1zM773 502h1v1h-1zM663 449h1v2h-1zM806 526h1v1h-1zM354 536h1v1h-1zM757 484h1v1h-1zM249 581h1v1h-1zM229 612h1v1h-1zM378 563h1v2h-1zM779 508h1v1h-1zM379 565h1v1h-1zM851 533h1v1h-1zM812 532h1v1h-1zM780 509h1v1h-1zM764 492h1v1h-1zM236 601h1v1h-1zM671 440h1v1h-1zM616 504h1v1h-1zM674 436h1v1h-1zM813 533h1v1h-1zM735 451h1v2h-1zM385 571h1v1h-1zM9 586h1v1h-1zM738 457h1v1h-1zM572 583h1v1h-1zM386 572h1v1h-1zM556 602h1v1h-1zM368 550h1v2h-1zM588 553h1v2h-1zM728 439h1v1h-1zM627 490h1v2h-1zM655 458h1v2h-1zM658 455h1v1h-1zM801 522h1v1h-1zM224 617h1v1h-1zM264 563h1v2h-1zM734 449h1v2h-1zM742 463h1v1h-1zM727 437h1v2h-1zM583 563h1v2h-1zM563 595h1v1h-1zM756 483h1v1h-1zM963 556h1v1h-1zM575 578h1v1h-1zM367 549h1v1h-1zM19 598h1v1h-1zM643 471h1v1h-1zM275 551h1v1h-1zM20 599h1v1h-1zM279 548h1v1h-1zM682 425h1v1h-1zM256 573h1v1h-1zM272 554h1v1h-1zM677 432h1v1h-1zM858 525h1v1h-1zM239 595h1v2h-1zM719 428h1v1h-1zM566 591h1v1h-1zM12 590h1v1h-1zM635 480h1v1h-1zM720 429h1v1h-1zM267 560h1v1h-1zM623 496h1v1h-1zM370 553h1v2h-1zM853 531h1v1h-1zM606 519h1v2h-1zM774 503h1v1h-1zM235 602h1v2h-1zM259 569h1v2h-1zM650 464h1v1h-1zM846 537h1v1h-1zM807 527h1v1h-1zM808 528h1v1h-1zM955 547h1v1h-1zM558 600h1v1h-1zM381 567h1v1h-1zM231 610h1v1h-1zM638 476h1v1h-1zM744 465h1v2h-1zM26 604h1v1h-1zM815 535h1v1h-1zM251 579h1v1h-1zM767 495h1v1h-1zM662 451h1v1h-1zM665 447h1v1h-1zM745 467h1v1h-1zM228 613h1v1h-1zM369 552h1v1h-1zM730 441h1v2h-1zM759 486h1v2h-1zM578 573h1v1h-1zM391 576h1v1h-1zM618 502h1v1h-1zM921 530h1v1h-1zM673 437h1v1h-1zM766 494h1v1h-1zM781 510h1v1h-1zM25 603h1v1h-1zM4 580h1v1h-1zM645 469h1v1h-1zM814 534h1v1h-1zM626 492h1v1h-1zM629 488h1v1h-1zM373 557h1v2h-1zM609 515h1v1h-1zM951 544h1v1h-1zM994 604h1v1h-1zM729 440h1v1h-1zM274 552h1v1h-1zM621 498h1v1h-1zM758 485h1v1h-1zM660 453h1v1h-1zM380 566h1v1h-1zM637 477h1v2h-1zM22 601h1v1h-1zM269 558h1v1h-1zM657 456h1v1h-1zM844 539h1v1h-1zM605 521h1v2h-1zM223 618h1v1h-1zM632 483h1v2h-1zM562 596h1v1h-1zM565 592h1v1h-1zM991 602h1v1h-1zM387 573h1v1h-1zM802 523h1v1h-1zM242 591h1v1h-1zM743 464h1v1h-1zM234 604h1v2h-1zM14 592h1v1h-1zM258 571h1v1h-1zM649 465h1v1h-1zM278 549h1v1h-1zM226 615h1v1h-1zM640 474h1v1h-1zM238 597h1v2h-1zM21 600h1v1h-1zM676 433h1v1h-1zM679 429h1v1h-1zM592 546h1v1h-1zM855 529h1v1h-1zM957 549h1v1h-1zM266 561h1v1h-1zM958 550h1v1h-1zM652 462h1v1h-1zM769 498h1v1h-1zM964 557h1v1h-1zM747 470h1v1h-1zM261 567h1v1h-1zM371 555h1v1h-1zM965 558h1v1h-1zM612 510h1v1h-1zM372 556h1v1h-1zM557 601h1v1h-1zM761 489h1v1h-1zM776 505h1v1h-1zM809 529h1v1h-1zM956 548h1v1h-1zM667 445h1v1h-1z"/>
<g shape-rendering="geometricPrecision">
<rect x="5.5" y="3.5" width="11" height="10" rx="2" fill="none" stroke="#8c8c8c"/><rect x="12" y="5" width="3" height="7" fill="#888888"/>
<rect x="1060.5" y="24.5" width="11" height="10" rx="2" fill="none" stroke="#8c8c8c"/><rect x="1067" y="26" width="3" height="7" fill="#888888"/>
<path d="M1047.5 24.4 L1052.6 29.5 L1047.5 34.6 L1042.4 29.5 Z" fill="none" stroke="#7a7a7a"/>
<circle cx="122" cy="29" r="6.1" fill="#787878"/><path d="M119 28 L122 30.9 L125 28" fill="none" stroke="#0a0a0a" stroke-width="1.1"/>
<circle cx="8" cy="406" r="6.1" fill="#787878"/><path d="M5 405 L8 407.9 L11 405" fill="none" stroke="#0a0a0a" stroke-width="1.1"/>
</g>
</svg>
<div id="tx">
<div class="t" style="left:28px;top:2px;color:#ffffff;">分时</div>
<div class="t" style="left:62px;top:2px;color:#ffffff;"><span class=d>1</span>分钟</div>
<div class="t" style="left:101px;top:2px;color:#ffffff;"><span class=d>5</span>分钟</div>
<div class="t" style="left:140px;top:2px;color:#ffffff;"><span class=d>15</span>分钟</div>
<div class="t" style="left:186px;top:2px;color:#ffffff;"><span class=d>30</span>分钟</div>
<div class="t" style="left:231px;top:2px;color:#ffffff;"><span class=d>60</span>分钟</div>
<div class="t" style="left:278px;top:2px;color:#00ffff;">日线</div>
<div class="t" style="left:312px;top:2px;color:#ffffff;">周线</div>
<div class="t" style="left:345px;top:2px;color:#ffffff;">月线</div>
<div class="t" style="left:378px;top:2px;color:#ffffff;">多周期</div>
<div class="t" style="left:422px;top:2px;color:#ffffff;">更多</div>
<div class="t" style="left:450px;top:2px;color:#ffffff;">&gt;</div>
<div class="t" style="left:816px;top:2px;color:#ffffff;">复权</div>
<div class="t" style="left:850px;top:2px;color:#ffffff;">叠加</div>
<div class="t" style="left:885px;top:2px;color:#ffffff;">多股</div>
<div class="t" style="left:920px;top:2px;color:#ffffff;">统计</div>
<div class="t" style="left:955px;top:2px;color:#ffffff;">画线</div>
<div class="t" style="left:993px;top:2px;color:#ffffff;">F10</div>
<div class="t" style="left:1025px;top:2px;color:#ffffff;">标记</div>
<div class="t" style="left:1058px;top:2px;color:#ffffff;">+自选</div>
<div class="t" style="left:1096px;top:2px;color:#ffffff;">返回</div>
<div class="t" style="left:3px;top:22px;color:#ffffff;">维信诺(日线.前复权)</div>
<div class="t r" style="top:59px;color:#e00000">11.00</div>
<div class="t r" style="top:104px;color:#e00000">10.50</div>
<div class="t r" style="top:149px;color:#e00000">10.00</div>
<div class="t r" style="top:194px;color:#e00000">9.50</div>
<div class="t r" style="top:239px;color:#e00000">9.00</div>
<div class="t r" style="top:284px;color:#e00000">8.50</div>
<div class="t r" style="top:329px;color:#e00000">8.00</div>
<div class="t r" style="top:374px;color:#e00000">7.50</div>
<div class="t r" style="top:407px;color:#e00000">80.00</div>
<div class="t r" style="top:439px;color:#e00000">70.00</div>
<div class="t r" style="top:471px;color:#e00000">60.00</div>
<div class="t r" style="top:503px;color:#e00000">50.00</div>
<div class="t r" style="top:535px;color:#e00000">40.00</div>
<div class="t r" style="top:568px;color:#e00000">30.00</div>
<div class="t" style="left:18px;top:399px;color:#ffffff;">股朋指标网</div>
<div class="t" style="left:84px;top:399px;color:#ffffff;">RK: 22.62</div>
<div class="t" style="left:142.5px;top:399px;color:#ffff00;">RD: 25.05</div>
<div class="t" style="left:202px;top:399px;color:#ff00ff;">RJ: 17.76</div>
<div style="position:absolute;left:1077px;top:507px;width:49px;height:15px;background:#400080;border-top:1px solid #8e0000;border-bottom:1px solid #8e0000;"></div>
<div class="t" style="left:1077px;top:508px;color:#ffffff;">45.70</div>
<div class="t" style="left:5px;top:632px;color:#e00000;">2025年</div>
<div class="t" style="left:83px;top:632px;color:#e00000;">10</div>
<div class="t" style="left:232px;top:632px;color:#e00000;">11</div>
<div class="t" style="left:363px;top:632px;color:#e00000;">12</div>
<div class="t" style="left:564px;top:632px;color:#e00000;">1</div>
<div class="t" style="left:739px;top:632px;color:#e00000;">2</div>
<div class="t" style="left:861px;top:632px;color:#e00000;">3</div>
<div class="t" style="left:230.5px;top:616px;color:#ff0000;">多</div>
</div>
<div id="wm"><div class="a">指标公式网</div><div class="b">www.zbgs3.com</div></div>
</body></html>
